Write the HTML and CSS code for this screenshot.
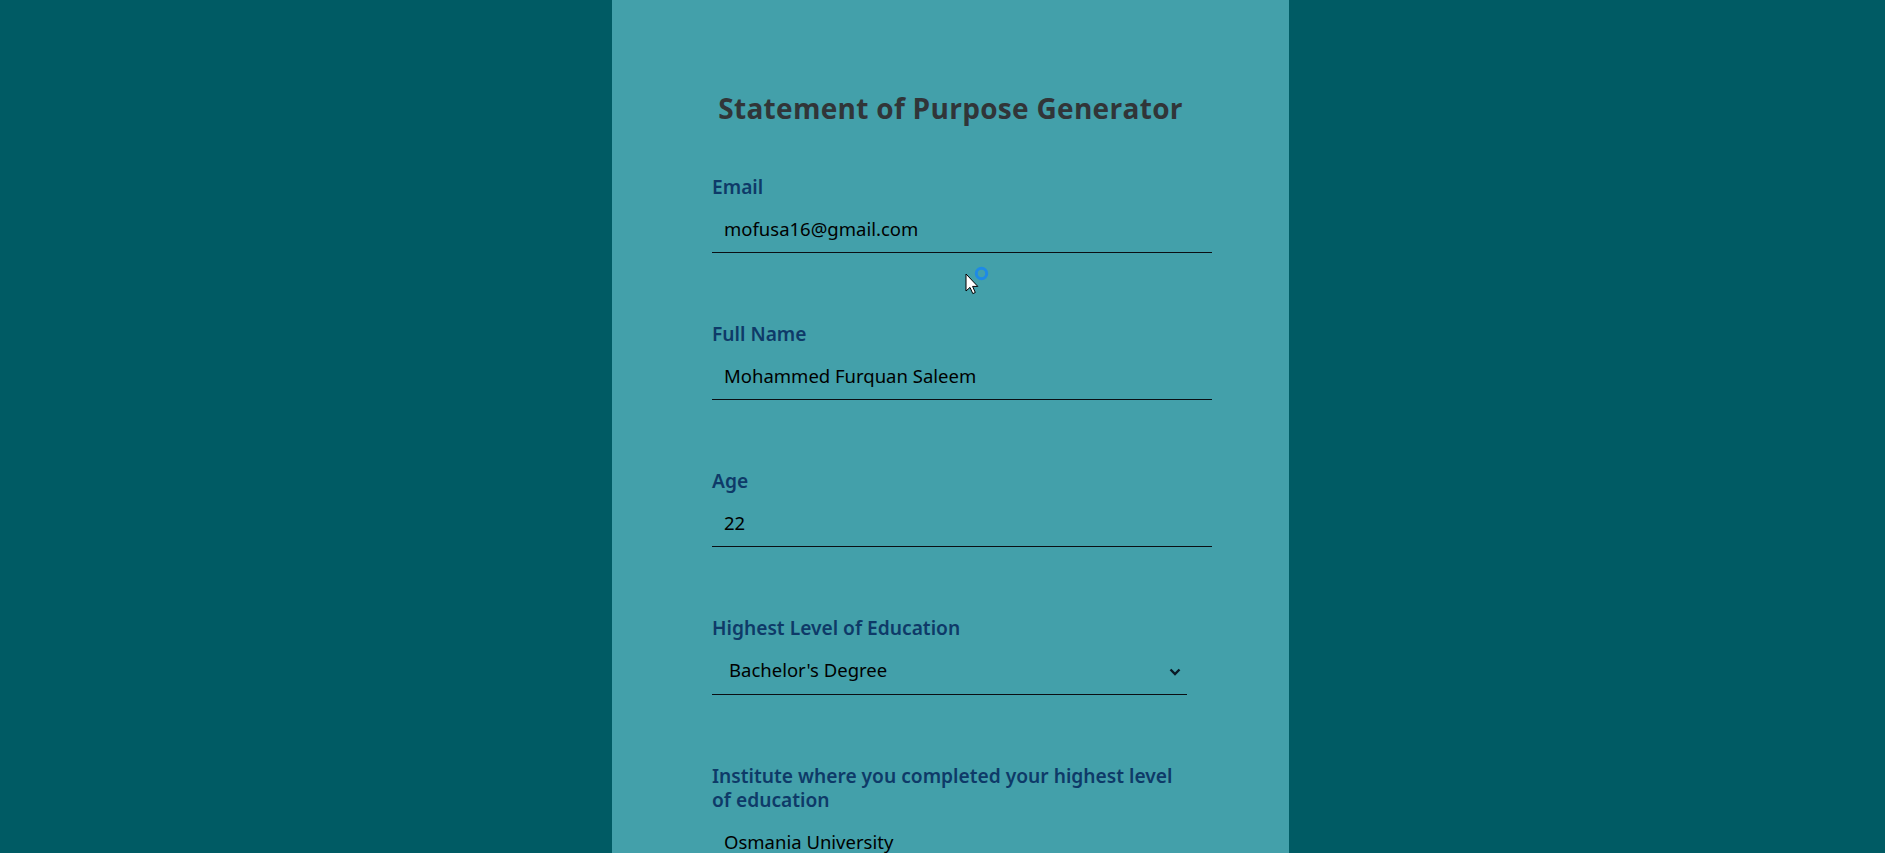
FILE: index.html
```html
<!DOCTYPE html>
<html lang="en">
<head>
<meta charset="utf-8">
<title>Statement of Purpose Generator</title>
<link rel="stylesheet" href="styles.css">
</head>
<body>
<div class="page">
  <main class="panel">
    <h1 class="title">Statement of Purpose Generator</h1>
    <form class="form">
      <div class="field">
        <label class="label" for="email">Email</label>
        <input class="input" id="email" type="email" value="mofusa16@gmail.com">
      </div>
      <div class="field">
        <label class="label" for="name">Full Name</label>
        <input class="input" id="name" type="text" value="Mohammed Furquan Saleem">
      </div>
      <div class="field">
        <label class="label" for="age">Age</label>
        <input class="input" id="age" type="text" value="22">
      </div>
      <div class="field">
        <label class="label" for="edu">Highest Level of Education</label>
        <div class="select-wrap">
          <select class="select" id="edu">
            <option>Bachelor's Degree</option>
            <option>Master's Degree</option>
            <option>PhD</option>
          </select>
          <svg class="chevron" width="12" height="8" viewBox="0 0 12 8"><path d="M1.5 1.5 L6 6 L10.5 1.5" fill="none" stroke="#0b1a26" stroke-width="2.4"/></svg>
        </div>
      </div>
      <div class="field">
        <label class="label label-wrap" for="inst">Institute where you completed your highest level of education</label>
        <input class="input" id="inst" type="text" value="Osmania University">
      </div>
      <div class="field">
        <label class="label" for="major">Major</label>
        <input class="input" id="major" type="text" value="">
      </div>
    </form>
  </main>
</div>
<div class="cursor">
  <svg width="28" height="30" viewBox="0 0 28 30">
    <path d="M1 8 L1 25 L5 21.4 L7.8 27.6 L10.3 26.5 L7.6 20.4 L12.8 20.4 Z" fill="#fff" stroke="#000" stroke-width="1" stroke-linejoin="round"/>
    <circle cx="16.5" cy="7.5" r="5.2" fill="none" stroke="#1e8ae6" stroke-width="3"/>
  </svg>
</div>
</body>
</html>
```

FILE: styles.css
```css
html, body {
  margin: 0;
  padding: 0;
  height: 100%;
  overflow: hidden;
}

body {
  background: #005b64;
  font-family: "Noto Sans", "DejaVu Sans", sans-serif;
}

.page {
  display: grid;
  grid-template-columns: 612px 677px 1fr;
  min-height: 100vh;
}

.panel {
  grid-column: 2;
  background: #43a0aa;
  padding: 91px 100px 40px;
  box-sizing: border-box;
}

.title {
  margin: 0 0 50px;
  text-align: center;
  font-family: "Open Sans", "Lato", sans-serif;
  font-weight: 700;
  font-size: 28px;
  line-height: 34px;
  letter-spacing: 0.3px;
  color: #313538;
}

.form {
  display: flex;
  flex-direction: column;
  gap: 69px;
}

.field {
  display: flex;
  flex-direction: column;
  gap: 7px;
}

.label {
  font-size: 19.2px;
  line-height: 24px;
  font-weight: 600;
  color: #0e3a68;
}

.label-wrap {
  max-width: 475px;
}

.input {
  width: 500px;
  box-sizing: border-box;
  border: none;
  border-bottom: 1px solid #0a0f14;
  background: transparent;
  padding: 11px 12px 11px;
  font-family: "Noto Sans", "DejaVu Sans", sans-serif;
  font-size: 18.5px;
  line-height: 24px;
  color: #000;
  outline: none;
}

.select-wrap {
  position: relative;
  width: 475px;
}

.select {
  appearance: none;
  -webkit-appearance: none;
  width: 100%;
  box-sizing: border-box;
  border: none;
  border-bottom: 1px solid #0a0f14;
  border-radius: 0;
  background: transparent;
  padding: 11px 30px 12px 17px;
  font-family: "Noto Sans", "DejaVu Sans", sans-serif;
  font-size: 18.5px;
  line-height: 24px;
  height: 48px;
  color: #000;
  outline: none;
}

.chevron {
  position: absolute;
  right: 6px;
  top: 21px;
}

.cursor {
  position: absolute;
  left: 965px;
  top: 266px;
  pointer-events: none;
}
```
